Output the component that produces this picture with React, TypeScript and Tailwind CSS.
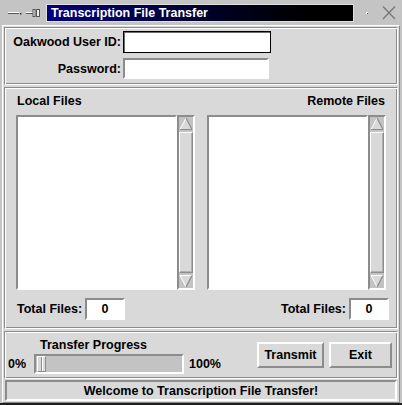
import React from 'react';

const sunken = 'border-2 border-t-[#8c8c8c] border-l-[#8c8c8c] border-b-white border-r-white';
const raised = 'border-2 border-t-white border-l-white border-b-[#8c8c8c] border-r-[#8c8c8c]';
const groove =
  'border border-t-[#8c8c8c] border-l-[#8c8c8c] border-b-white border-r-white shadow-[inset_1px_1px_0_#fff,inset_-1px_-1px_0_#8c8c8c]';

const Arrow = ({ down }: { down?: boolean }) => (
  <svg width="14" height="14" viewBox="0 0 14 14" className="block shrink-0">
    {down ? (
      <>
        <polygon points="1,1.5 13,1.5 7,13" fill="#d9d9d9" />
        <line x1="1" y1="1.5" x2="13" y2="1.5" stroke="#ffffff" strokeWidth="1" />
        <line x1="1" y1="1.5" x2="7" y2="13" stroke="#ffffff" strokeWidth="1" />
        <line x1="13" y1="1.5" x2="7" y2="13" stroke="#8c8c8c" strokeWidth="1.2" />
      </>
    ) : (
      <>
        <polygon points="7,1 13,12.5 1,12.5" fill="#d9d9d9" />
        <line x1="1" y1="12.5" x2="7" y2="1" stroke="#ffffff" strokeWidth="1" />
        <line x1="7" y1="1" x2="13" y2="12.5" stroke="#8c8c8c" strokeWidth="1.2" />
        <line x1="1" y1="12.5" x2="13" y2="12.5" stroke="#8c8c8c" strokeWidth="1" />
      </>
    )}
  </svg>
);

const Scrollbar = () => (
  <div className={`w-[18px] h-[175px] ${sunken} bg-[#c3c3c3] flex flex-col`}>
    <Arrow />
    <div className="flex-1 my-[1px] border border-t-white border-l-white border-b-[#8c8c8c] border-r-[#8c8c8c] bg-[#d9d9d9] shadow-[inset_-1px_-1px_0_#b0b0b0]" />
    <Arrow down />
  </div>
);

const FileList = () => (
  <div className="flex">
    <div className={`w-[161px] h-[175px] bg-white ${sunken}`} />
    <Scrollbar />
  </div>
);

const CountBox = () => (
  <div className={`w-[40px] h-[22px] bg-white ${sunken} flex items-center justify-center`}>0</div>
);

export default function App() {
  return (
    <div className="w-[402px] h-[405px] bg-[#c4c4c4] flex flex-col font-['Liberation_Sans',Arial,sans-serif] font-bold text-[12.5px] text-black leading-[14px] border-b-2 border-[#1e1e1e]">
      {/* title bar */}
      <div className="h-[25px] flex items-center shrink-0">
        <svg width="40" height="25" viewBox="0 0 40 25" className="block shrink-0">
          <line x1="8" y1="13.5" x2="19" y2="13.5" stroke="#555" strokeWidth="1" />
          <line x1="8" y1="12.5" x2="19" y2="12.5" stroke="#fff" strokeWidth="1" />
          <rect x="20" y="13" width="1.5" height="1.5" fill="#333" />
          <line x1="26" y1="13.5" x2="33" y2="13.5" stroke="#555" strokeWidth="1" />
          <line x1="26" y1="12.5" x2="33" y2="12.5" stroke="#fff" strokeWidth="1" />
          <rect x="33" y="9.5" width="2" height="7" fill="#fff" stroke="#555" strokeWidth="1" />
          <rect x="36.5" y="9.5" width="3" height="7" fill="#eee" stroke="#555" strokeWidth="1" />
        </svg>
        <div className="ml-[6px] w-[308px] h-[18px] border border-[#e0e0e0] bg-gradient-to-r from-[#000080] to-black flex items-center pl-[4px] text-white text-[12.5px]">
          Transcription File Transfer
        </div>
        <svg width="48" height="25" viewBox="0 0 48 25" className="block shrink-0">
          <rect x="12" y="12" width="2" height="2" fill="#fff" />
          <rect x="13" y="13" width="1" height="1" fill="#555" />
          <line x1="29" y1="6.5" x2="41" y2="19" stroke="#777" strokeWidth="1.3" />
          <line x1="41" y1="6.5" x2="29" y2="19" stroke="#777" strokeWidth="1.3" />
        </svg>
      </div>

      {/* window body */}
      <div className="mx-[2px] h-[378px] border border-t-white border-l-white border-b-[#8c8c8c] border-r-[#8c8c8c] bg-[#d9d9d9] p-[1px] flex flex-col">
        {/* login */}
        <div className={`h-[58px] ${groove} pt-[3px] flex flex-col gap-[5px]`}>
          <div className="flex items-center h-[22px]">
            <div className="w-[116px] text-right">Oakwood User ID:</div>
            <div className="ml-[2px] w-[148px] h-[22px] border border-black bg-white shadow-[inset_1px_1px_0_#6e6e6e]" />
          </div>
          <div className="flex items-center h-[21px]">
            <div className="w-[116px] text-right">Password:</div>
            <div className={`ml-[2px] w-[146px] h-[21px] bg-white ${sunken}`} />
          </div>
        </div>

        {/* file lists */}
        <div className={`mt-[2px] h-[242px] ${groove} px-[11px] flex flex-col`}>
          <div className="mt-[6px] h-[14px] flex justify-between px-[1px]">
            <span>Local Files</span>
            <span>Remote Files</span>
          </div>
          <div className="mt-[7px] flex justify-between">
            <FileList />
            <FileList />
          </div>
          <div className="mt-[8px] flex justify-between items-center">
            <div className="flex items-center gap-[3px] pl-[1px]">
              <span>Total Files:</span>
              <CountBox />
            </div>
            <div className="flex items-center gap-[3px] -mr-[3px]">
              <span>Total Files:</span>
              <CountBox />
            </div>
          </div>
        </div>

        {/* progress */}
        <div className={`mt-[2px] h-[48px] ${groove} flex`}>
          <div className="flex flex-col">
            <div className="mt-[6px] pl-[35px] h-[14px]">Transfer Progress</div>
            <div className="mt-[2px] flex items-center h-[20px]">
              <span className="w-[29px] pl-[3px]">0%</span>
              <div className={`w-[150px] h-[20px] bg-[#c3c3c3] ${sunken} flex`}>
                <div className="ml-[1px] w-[9px] h-full border border-t-white border-l-white border-b-[#8c8c8c] border-r-[#8c8c8c] bg-[#d9d9d9] flex justify-center">
                  <div className="w-[1px] h-full bg-[#8c8c8c] shadow-[1px_0_0_#fff]" />
                </div>
              </div>
              <span className="ml-[5px]">100%</span>
            </div>
          </div>
          <div className="ml-[36px] mt-[10px] flex gap-[5px]">
            <div className={`w-[67px] h-[26px] ${raised} flex items-center justify-center`}>Transmit</div>
            <div className={`w-[63px] h-[26px] ${raised} flex items-center justify-center`}>Exit</div>
          </div>
        </div>

        {/* status */}
        <div className={`mt-[1px] mx-[1px] h-[21px] ${sunken} flex items-center justify-center`}>
          Welcome to Transcription File Transfer!
        </div>
      </div>
    </div>
  );
}
